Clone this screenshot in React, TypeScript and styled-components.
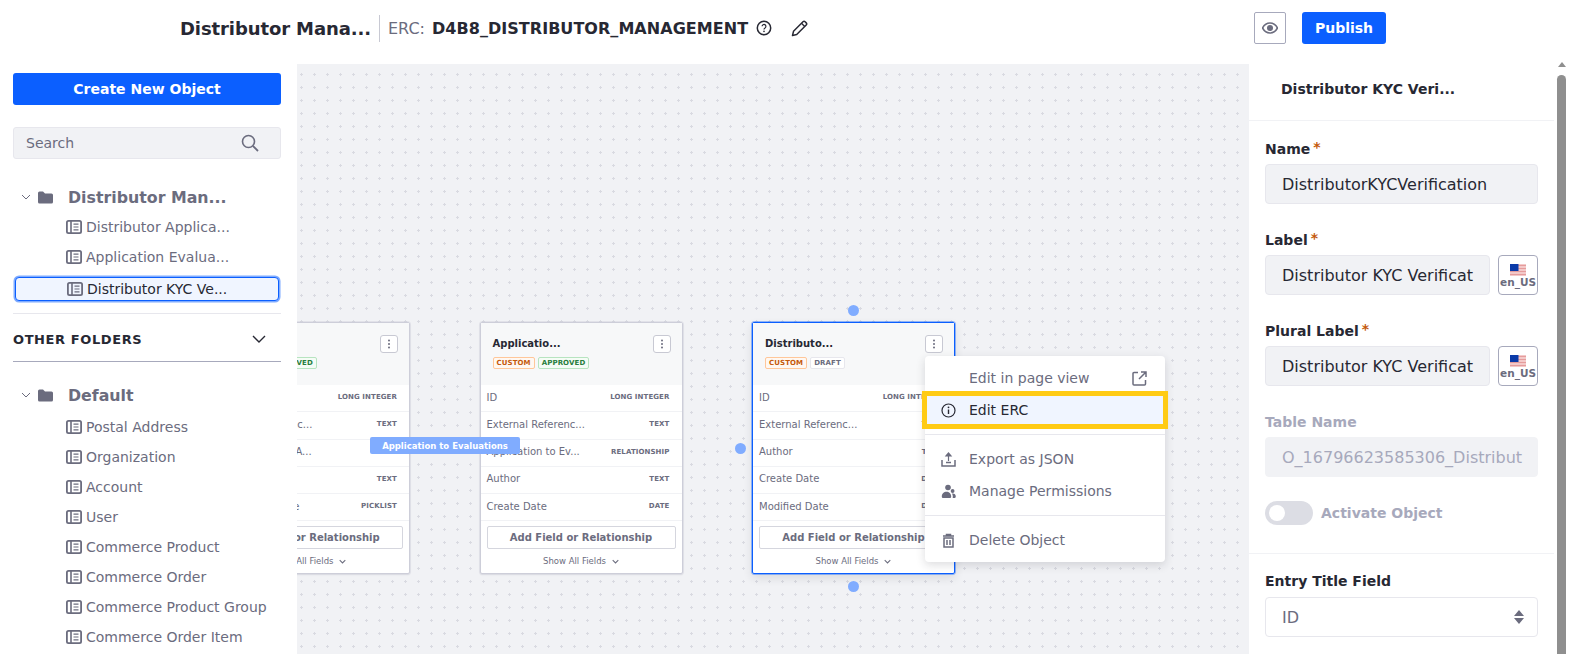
import React from "react"
import styled, { createGlobalStyle } from "styled-components"

const GlobalStyle = createGlobalStyle`
  html, body {
    margin: 0;
    padding: 0;
    background: #fff;
    font-family: "DejaVu Sans", sans-serif;
    color: #272833;
  }
  * {
    box-sizing: border-box;
  }
`

const Page = styled.div`
  width: 1570px;
  height: 654px;
  overflow: hidden;
  display: flex;
  flex-direction: column;
  background: #fff;
`

const Header = styled.header`
  height: 57px;
  flex: none;
  display: flex;
  align-items: center;
  padding: 0 184px 1px 180px;
`
const ModelTitle = styled.h1`
  margin: 0;
  width: 190px;
  font-size: 18px;
  font-weight: 700;
  letter-spacing: -0.1px;
  color: #272833;
  white-space: nowrap;
`
const HeaderDivider = styled.span`
  width: 1px;
  height: 27px;
  margin: 0 8px 0 9px;
  background: #c8c9d3;
`
const ErcLabel = styled.span`
  font-size: 16px;
  color: #6b6c7e;
  margin-right: 7px;
`
const ErcValue = styled.span`
  font-size: 16px;
  font-weight: 700;
  letter-spacing: 0.04px;
  color: #272833;
`
const HelpIcon = styled.svg`
  margin-left: 8px;
  width: 16px;
  height: 16px;
`
const PencilIcon = styled.svg`
  margin-left: 19px;
  width: 17px;
  height: 17px;
`
const HeaderActions = styled.div`
  margin-left: auto;
  display: flex;
  gap: 16px;
  align-items: center;
`
const EyeButton = styled.button`
  width: 32px;
  height: 32px;
  padding: 0;
  display: flex;
  align-items: center;
  justify-content: center;
  background: #fff;
  border: 1px solid #a7a9bc;
  border-radius: 2px;
`
const PublishButton = styled.button`
  width: 84px;
  height: 32px;
  border: none;
  border-radius: 3px;
  background: #0b5fff;
  color: #fff;
  font-family: inherit;
  font-size: 14px;
  font-weight: 700;
`

const Body = styled.div`
  flex: 1;
  min-height: 0;
  display: flex;
`

const Sidebar = styled.aside`
  position: relative;
  z-index: 2;
  width: 297px;
  flex: none;
  padding: 16px 16px 0 13px;
  background: #fff;
  overflow: hidden;
`
const CreateButton = styled.button`
  display: block;
  width: 268px;
  height: 32px;
  border: none;
  border-radius: 3px;
  background: #0b5fff;
  color: #fff;
  font-family: inherit;
  font-size: 14px;
  font-weight: 700;
`
const SearchBox = styled.div`
  margin-top: 22px;
  width: 268px;
  height: 32px;
  display: flex;
  align-items: center;
  justify-content: space-between;
  padding: 0 21px 0 12px;
  background: #f1f2f5;
  border: 1px solid #e7e7ed;
  border-radius: 3px;
  font-size: 14px;
  color: #6b6c7e;
`
const FolderRow = styled.div<{ $top: number }>`
  margin-top: ${(p) => p.$top}px;
  height: 24px;
  display: flex;
  align-items: center;
  padding-left: 8px;
`
const Caret = styled.svg`
  width: 10px;
  height: 10px;
`
const FolderIcon = styled.svg`
  margin-left: 7px;
  width: 15px;
  height: 13px;
`
const FolderName = styled.span`
  margin-left: 15px;
  font-size: 15.8px;
  font-weight: 700;
  color: #6b6c7e;
`
const ObjectList = styled.ul<{ $top: number }>`
  margin: ${(p) => p.$top}px 0 0;
  padding: 0;
  list-style: none;
`
const ObjectItem = styled.li<{ $active?: boolean }>`
  height: ${(p) => (p.$active ? "24px" : "30px")};
  margin: ${(p) => (p.$active ? "5px 2px 0" : "0")};
  display: flex;
  align-items: center;
  gap: 4px;
  padding-left: ${(p) => (p.$active ? "51px" : "53px")};
  font-size: 14px;
  white-space: nowrap;
  color: ${(p) => (p.$active ? "#272833" : "#6b6c7e")};
  ${(p) =>
    p.$active &&
    `
    background: #f0f5ff;
    border: 1px solid #0b5fff;
    border-radius: 4px;
    box-shadow: 0 0 0 1.5px #80acff;
  `}
`
const ObjectGlyph = styled.svg`
  flex: none;
  width: 16px;
  height: 14px;
`
const SideDivider = styled.div<{ $strong?: boolean; $top?: number }>`
  width: 268px;
  height: 1px;
  margin-top: ${(p) => p.$top ?? 0}px;
  background: ${(p) => (p.$strong ? "#a7a9bc" : "#e7e7ed")};
`
const OtherFolders = styled.div`
  width: 268px;
  height: 44px;
  margin-top: 3px;
  display: flex;
  align-items: center;
  justify-content: space-between;
  padding-right: 15px;
  font-size: 13px;
  font-weight: 700;
  letter-spacing: 0.6px;
  color: #272833;
`
const ChevronBig = styled.svg`
  width: 14px;
  height: 14px;
`

const Canvas = styled.main`
  position: relative;
  flex: 1;
  min-width: 0;
  margin-top: 7px;
  background-color: #f1f2f5;
  background-image: radial-gradient(circle, #d9dae1 1px, transparent 1.2px);
  background-size: 13px 13px;
  background-position: -2px 4px;
`
const Card = styled.article<{ $left: number; $selected?: boolean }>`
  position: absolute;
  left: ${(p) => p.$left}px;
  top: 258px;
  width: 203px;
  height: 252px;
  background: #fff;
  border: 1px solid ${(p) => (p.$selected ? "#0b5fff" : "#cdced9")};
  outline: 1px solid ${(p) => (p.$selected ? "rgba(11, 95, 255, 0.4)" : "rgba(205, 206, 217, 0.4)")};
  border-radius: 2px;
  box-shadow: ${(p) => (p.$selected ? "0 4px 10px rgba(39, 40, 51, 0.12)" : "0 1px 2px rgba(39, 40, 51, 0.08)")};
`
const CardHead = styled.div`
  position: relative;
  height: 62px;
  padding: 15px 12px 0 12px;
  background: #f7f8f9;
`
const CardTitle = styled.div`
  font-size: 10px;
  font-weight: 700;
  color: #272833;
  line-height: 12px;
`
const Tags = styled.div`
  margin-top: 7px;
  display: flex;
  gap: 3px;
`
const Tag = styled.span<{ $kind: "custom" | "approved" | "draft" }>`
  height: 12px;
  padding: 0 3px;
  display: flex;
  align-items: center;
  font-size: 7px;
  font-weight: 700;
  letter-spacing: 0.1px;
  border-radius: 2px;
  border: 1px solid
    ${(p) => (p.$kind === "custom" ? "#ffc79a" : p.$kind === "approved" ? "#b7e4c0" : "#e7e7ed")};
  color: ${(p) => (p.$kind === "custom" ? "#c4590a" : p.$kind === "approved" ? "#287d3c" : "#6b6c7e")};
  background: ${(p) => (p.$kind === "custom" ? "#fff8f2" : p.$kind === "approved" ? "#f5fcf6" : "#fff")};
`
const KebabButton = styled.span`
  position: absolute;
  top: 12px;
  right: 11px;
  width: 18px;
  height: 18px;
  display: flex;
  align-items: center;
  justify-content: center;
  background: #fff;
  border: 1px solid #c8c9d3;
  border-radius: 3px;
`
const FieldRow = styled.div`
  height: 27.25px;
  display: flex;
  align-items: center;
  justify-content: space-between;
  padding: 0 12px 2px 6px;
  border-bottom: 1px solid #f1f2f5;
  &:last-of-type {
    border-bottom: none;
  }
`
const FieldName = styled.span`
  font-size: 10px;
  color: #6b6c7e;
  white-space: nowrap;
`
const FieldType = styled.span`
  font-size: 7px;
  font-weight: 700;
  letter-spacing: 0.1px;
  color: #6b6c7e;
`
const AddField = styled.div`
  margin: 5px 6px 0;
  height: 23px;
  display: flex;
  align-items: center;
  justify-content: center;
  border: 1px solid #d5d6de;
  border-radius: 2px;
  font-size: 10px;
  font-weight: 700;
  color: #6b6c7e;
`
const ShowAll = styled.div`
  margin-top: 7px;
  display: flex;
  justify-content: center;
  align-items: center;
  gap: 6px;
  font-size: 8.5px;
  color: #6b6c7e;
`
const EdgeLabel = styled.div`
  position: absolute;
  left: 73px;
  top: 373px;
  width: 150px;
  height: 17px;
  display: flex;
  align-items: center;
  justify-content: center;
  border-radius: 2px;
  background: #80acff;
  color: #fff;
  font-size: 8.5px;
  font-weight: 700;
`
const Handle = styled.span<{ $x: number; $y: number }>`
  position: absolute;
  left: ${(p) => p.$x - 5.5}px;
  top: ${(p) => p.$y - 5.5}px;
  width: 11px;
  height: 11px;
  border-radius: 50%;
  background: #80acff;
`
const Menu = styled.div`
  position: absolute;
  left: 628px;
  top: 292px;
  width: 240px;
  padding: 6px 0;
  background: #fff;
  border-radius: 4px;
  box-shadow: 0 3px 10px rgba(39, 40, 51, 0.16);
`
const MenuRow = styled.div<{ $active?: boolean }>`
  position: relative;
  height: 32px;
  display: flex;
  align-items: center;
  gap: 13px;
  padding: 0 18px 0 16px;
  font-size: 14px;
  color: ${(p) => (p.$active ? "#272833" : "#6b6c7e")};
  ${(p) =>
    p.$active &&
    `
    background: #f0f5ff;
    outline: 5px solid #ffcb14;
    outline-offset: -2px;
  `}
`
const MenuIcon = styled.svg`
  width: 15px;
  height: 15px;
  flex: none;
`
const MenuSpacer = styled.span`
  width: 15px;
  flex: none;
`
const OpenIcon = styled.svg`
  margin-left: auto;
  width: 15px;
  height: 15px;
`
const MenuDivider = styled.div`
  height: 1px;
  margin: 8px 0;
  background: #e7e7ed;
`

const Panel = styled.aside`
  position: relative;
  z-index: 2;
  width: 305px;
  flex: none;
  background: #fff;
  overflow: hidden;
`
const PanelTitle = styled.div`
  height: 64px;
  padding: 0 0 0 32px;
  display: flex;
  align-items: center;
  font-size: 14px;
  font-weight: 700;
  color: #272833;
  border-bottom: 1px solid #f1f2f5;
`
const PanelBody = styled.div`
  padding: 19px 16px 0;
`
const FieldLabel = styled.label<{ $disabled?: boolean }>`
  display: block;
  height: 18px;
  margin-top: 27px;
  font-size: 14px;
  line-height: 18px;
  font-weight: 700;
  color: ${(p) => (p.$disabled ? "#a7a9bc" : "#272833")};
  &:first-child {
    margin-top: 0;
  }
`
const Star = styled.sup`
  margin-left: 3px;
  color: #c4590a;
  font-size: 14px;
  line-height: 0;
  vertical-align: 2px;
`
const InputLine = styled.div`
  display: flex;
  gap: 8px;
  margin-top: 6px;
`
const TextInput = styled.div<{ $disabled?: boolean }>`
  flex: 1;
  min-width: 0;
  height: 40px;
  padding: 0 16px;
  display: flex;
  align-items: center;
  white-space: nowrap;
  background: #f1f2f5;
  border: 1px solid ${(p) => (p.$disabled ? "#f1f2f5" : "#e7e7ed")};
  border-radius: 4px;
  font-size: 16px;
  color: ${(p) => (p.$disabled ? "#a7a9bc" : "#272833")};
`
const LocaleButton = styled.div`
  width: 40px;
  height: 40px;
  flex: none;
  padding-top: 2px;
  display: flex;
  flex-direction: column;
  align-items: center;
  justify-content: center;
  background: #fff;
  border: 1px solid #a7a9bc;
  border-radius: 4px;
  font-size: 10.5px;
  line-height: 13px;
  font-weight: 700;
  color: #6b6c7e;
`
const ToggleRow = styled.div`
  margin-top: 24px;
  display: flex;
  align-items: center;
  gap: 8px;
  font-size: 14px;
  font-weight: 700;
  color: #a7a9bc;
`
const Toggle = styled.span`
  position: relative;
  width: 48px;
  height: 24px;
  border-radius: 12px;
  background: #dcdde4;
  &::after {
    content: "";
    position: absolute;
    left: 4px;
    top: 4px;
    width: 16px;
    height: 16px;
    border-radius: 50%;
    background: #fff;
  }
`
const SectionDivider = styled.div`
  margin: 28px -16px 18px;
  height: 1px;
  background: #f1f2f5;
`
const EntrySection = styled.section``
const SelectBox = styled(TextInput)`
  flex: none;
  justify-content: space-between;
  background: #fff;
  color: #6b6c7e;
  margin-top: 7px;
  padding-right: 13px;
`
const Scrollbar = styled.div`
  flex: none;
  width: 16px;
  padding: 5px 4px 0 3px;
  display: flex;
  flex-direction: column;
  gap: 8px;
  background: #fff;
`
const ScrollArrow = styled.span`
  width: 0;
  height: 0;
  align-self: center;
  border-left: 4.5px solid transparent;
  border-right: 4.5px solid transparent;
  border-bottom: 5px solid #8f8f8f;
`
const ScrollThumb = styled.span`
  flex: 1;
  border-radius: 5px 5px 0 0;
  background: #8f8f8f;
`

const ObjectSvg = () => (
  <ObjectGlyph viewBox="0 0 16 14">
    <rect x="0.9" y="0.9" width="14.2" height="12.2" rx="1.6" fill="none" stroke="#6b6c7e" strokeWidth="1.8" />
    <path d="M5 1v12" stroke="#6b6c7e" strokeWidth="1.6" />
    <path d="M7.500 4.200h5M7.500 7h5M7.500 9.800h5" stroke="#6b6c7e" strokeWidth="1.200" />
  </ObjectGlyph>
)

const Folder = ({ top, name }: { top: number; name: string }) => (
  <FolderRow $top={top}>
    <Caret viewBox="0 0 10 10">
      <path d="M1 3l4 4 4-4" fill="none" stroke="#6b6c7e" strokeWidth="1" />
    </Caret>
    <FolderIcon viewBox="0 0 15 13">
      <path d="M0 2a1.500 1.500 0 0 1 1.500-1.500h3.500l2 2h6.500a1.500 1.500 0 0 1 1.500 1.500v7a1.500 1.500 0 0 1-1.500 1.500h-12a1.500 1.500 0 0 1-1.500-1.500z" fill="#6b6c7e" />
    </FolderIcon>
    <FolderName>{name}</FolderName>
  </FolderRow>
)

const Flag = () => (
  <svg width="16" height="12" viewBox="0 0 16 12">
    <rect width="16" height="12" fill="#f3c9c9" />
    <path d="M0 1.500h16M0 4.500h16M0 7.500h16M0 10.500h16" stroke="#e59c9c" strokeWidth="1" />
    <rect width="8.500" height="7" fill="#0b3aa8" />
  </svg>
)

const Kebab = () => (
  <svg width="4" height="10" viewBox="0 0 4 10">
    <circle cx="2" cy="1.500" r="1" fill="#6b6c7e" />
    <circle cx="2" cy="5" r="1" fill="#6b6c7e" />
    <circle cx="2" cy="8.500" r="1" fill="#6b6c7e" />
  </svg>
)

type NodeField = { name: string; type: string }
type NodeData = {
  left: number
  title: string
  status: "approved" | "draft"
  selected?: boolean
  fields: NodeField[]
}

const nodes: NodeData[] = [
  {
    left: -90,
    title: "Distributo...",
    status: "approved",
    fields: [
      { name: "ID", type: "LONG INTEGER" },
      { name: "External Referenc...", type: "TEXT" },
      { name: "Application into A...", type: "TEXT" },
      { name: "Author", type: "TEXT" },
      { name: "Application State", type: "PICKLIST" },
    ],
  },
  {
    left: 182.5,
    title: "Applicatio...",
    status: "approved",
    fields: [
      { name: "ID", type: "LONG INTEGER" },
      { name: "External Referenc...", type: "TEXT" },
      { name: "Application to Ev...", type: "RELATIONSHIP" },
      { name: "Author", type: "TEXT" },
      { name: "Create Date", type: "DATE" },
    ],
  },
  {
    left: 455,
    title: "Distributo...",
    status: "draft",
    selected: true,
    fields: [
      { name: "ID", type: "LONG INTEGER" },
      { name: "External Referenc...", type: "TEXT" },
      { name: "Author", type: "TEXT" },
      { name: "Create Date", type: "DATE" },
      { name: "Modified Date", type: "DATE" },
    ],
  },
]

const NodeCard = ({ node }: { node: NodeData }) => (
  <Card $left={node.left} $selected={node.selected}>
    <CardHead>
      <CardTitle>{node.title}</CardTitle>
      <Tags>
        <Tag $kind="custom">CUSTOM</Tag>
        <Tag $kind={node.status}>{node.status.toUpperCase()}</Tag>
      </Tags>
      <KebabButton>
        <Kebab />
      </KebabButton>
    </CardHead>
    {node.fields.map((f) => (
      <FieldRow key={f.name}>
        <FieldName>{f.name}</FieldName>
        <FieldType>{f.type}</FieldType>
      </FieldRow>
    ))}
    <AddField>Add Field or Relationship</AddField>
    <ShowAll>
      Show All Fields
      <svg width="7" height="7" viewBox="0 0 10 10">
        <path d="M1 3l4 4 4-4" fill="none" stroke="#6b6c7e" strokeWidth="1.500" />
      </svg>
    </ShowAll>
  </Card>
)

const firstObjects = ["Distributor Applica...", "Application Evalua..."]
const defaultObjects = [
  "Postal Address",
  "Organization",
  "Account",
  "User",
  "Commerce Product",
  "Commerce Order",
  "Commerce Product Group",
  "Commerce Order Item",
]

export default function App() {
  return (
    <Page>
      <GlobalStyle />
      <Header>
        <ModelTitle>Distributor Mana...</ModelTitle>
        <HeaderDivider />
        <ErcLabel>ERC:</ErcLabel>
        <ErcValue>D4B8_DISTRIBUTOR_MANAGEMENT</ErcValue>
        <HelpIcon viewBox="0 0 16 16">
          <circle cx="8" cy="8" r="6.700" fill="none" stroke="#272833" strokeWidth="1.500" />
          <path d="M6.100 6.300a1.900 1.900 0 1 1 2.900 1.600c-.7.400-1 .8-1 1.500" fill="none" stroke="#272833" strokeWidth="1.200" />
          <circle cx="8" cy="11.400" r=".8" fill="#272833" />
        </HelpIcon>
        <PencilIcon viewBox="0 0 17 17">
          <path d="M1.500 15.500l1-4.200L12 1.800a1.500 1.500 0 0 1 2.100 0l1.100 1.100a1.500 1.500 0 0 1 0 2.100L5.700 14.500z" fill="none" stroke="#272833" strokeWidth="1.500" strokeLinejoin="round" />
          <path d="M10.500 3.300l3.200 3.200" stroke="#272833" strokeWidth="1.300" />
        </PencilIcon>
        <HeaderActions>
          <EyeButton aria-label="Preview">
            <svg width="16" height="12" viewBox="0 0 16 12">
              <path d="M.5 6C2.200 2.800 4.900 1 8 1s5.800 1.800 7.500 5C13.800 9.200 11.100 11 8 11S2.200 9.200.5 6z" fill="none" stroke="#6b6c7e" strokeWidth="1.600" />
              <circle cx="8" cy="6" r="3" fill="#6b6c7e" />
            </svg>
          </EyeButton>
          <PublishButton>Publish</PublishButton>
        </HeaderActions>
      </Header>
      <Body>
        <Sidebar>
          <CreateButton>Create New Object</CreateButton>
          <SearchBox>
            Search
            <svg width="18" height="18" viewBox="0 0 18 18">
              <circle cx="7.500" cy="7.500" r="6" fill="none" stroke="#6b6c7e" strokeWidth="1.600" />
              <path d="M12 12l5 5" stroke="#6b6c7e" strokeWidth="1.800" />
            </svg>
          </SearchBox>
          <Folder top={26} name="Distributor Man..." />
          <ObjectList $top={3}>
            {firstObjects.map((o) => (
              <ObjectItem key={o}>
                <ObjectSvg />
                {o}
              </ObjectItem>
            ))}
            <ObjectItem $active>
              <ObjectSvg />
              Distributor KYC Ve...
            </ObjectItem>
          </ObjectList>
          <SideDivider $top={12} />
          <OtherFolders>
            OTHER FOLDERS
            <ChevronBig viewBox="0 0 14 14">
              <path d="M1 4l6 6 6-6" fill="none" stroke="#272833" strokeWidth="1.400" />
            </ChevronBig>
          </OtherFolders>
          <SideDivider $strong />
          <Folder top={21} name="Default" />
          <ObjectList $top={5}>
            {defaultObjects.map((o) => (
              <ObjectItem key={o}>
                <ObjectSvg />
                {o}
              </ObjectItem>
            ))}
          </ObjectList>
        </Sidebar>
        <Canvas>
          {nodes.map((n) => (
            <NodeCard key={n.left} node={n} />
          ))}
          <EdgeLabel>Application to Evaluations</EdgeLabel>
          <Handle $x={556} $y={246} />
          <Handle $x={443} $y={384} />
          <Handle $x={556} $y={522} />
          <Menu>
            <MenuRow>
              <MenuSpacer />
              Edit in page view
              <OpenIcon viewBox="0 0 15 15">
                <path d="M6 1.500H2a1 1 0 0 0-1 1v10.500a1 1 0 0 0 1 1h10.500a1 1 0 0 0 1-1V9" fill="none" stroke="#6b6c7e" strokeWidth="1.500" />
                <path d="M9 1h5v5M14 1L7 8" fill="none" stroke="#6b6c7e" strokeWidth="1.500" />
              </OpenIcon>
            </MenuRow>
            <MenuRow $active>
              <MenuIcon viewBox="0 0 15 15">
                <circle cx="7.500" cy="7.500" r="6.500" fill="none" stroke="#272833" strokeWidth="1.200" />
                <path d="M7.500 6.500v4.500" stroke="#272833" strokeWidth="1.400" />
                <circle cx="7.500" cy="4.300" r=".9" fill="#272833" />
              </MenuIcon>
              Edit ERC
            </MenuRow>
            <MenuDivider />
            <MenuRow>
              <MenuIcon viewBox="0 0 15 15">
                <path d="M1 8v6h13V8M5 10.500h5" fill="none" stroke="#6b6c7e" strokeWidth="1.500" />
                <path d="M7.500 9V2M5 4l2.500-3L10 4z" fill="#6b6c7e" stroke="#6b6c7e" strokeWidth="1.200" />
              </MenuIcon>
              Export as JSON
            </MenuRow>
            <MenuRow>
              <MenuIcon viewBox="0 0 15 15">
                <circle cx="7" cy="3.500" r="2.800" fill="#6b6c7e" />
                <path d="M.8 12.500c0-3 2.200-4.800 4.700-4.800s4.700 1.800 4.700 4.800c0 1-.8 1.500-1.500 1.500H2.300c-.8 0-1.500-.5-1.500-1.500z" fill="#6b6c7e" />
                <circle cx="11.600" cy="7" r="1.900" fill="#6b6c7e" />
                <path d="M11 9.500c2-.5 3.800.8 3.800 3 0 .8-.5 1.500-1.300 1.500h-1.800c.4-1.800-.1-3.300-.7-4.500z" fill="#6b6c7e" />
              </MenuIcon>
              Manage Permissions
            </MenuRow>
            <MenuDivider />
            <MenuRow>
              <MenuIcon viewBox="0 0 15 15">
                <path d="M2 3h11M5.500 3V1.500h4V3" fill="none" stroke="#6b6c7e" strokeWidth="1.500" />
                <path d="M3 5h9v9H3z" fill="none" stroke="#6b6c7e" strokeWidth="1.500" />
                <path d="M6 7v5M9 7v5" stroke="#6b6c7e" strokeWidth="1.500" />
              </MenuIcon>
              Delete Object
            </MenuRow>
          </Menu>
        </Canvas>
        <Panel>
          <PanelTitle>Distributor KYC Veri...</PanelTitle>
          <PanelBody>
            <FieldLabel>
              Name<Star>*</Star>
            </FieldLabel>
            <InputLine>
              <TextInput>DistributorKYCVerification</TextInput>
            </InputLine>
            <FieldLabel>
              Label<Star>*</Star>
            </FieldLabel>
            <InputLine>
              <TextInput>Distributor KYC Verificat</TextInput>
              <LocaleButton>
                <Flag />
                en_US
              </LocaleButton>
            </InputLine>
            <FieldLabel>
              Plural Label<Star>*</Star>
            </FieldLabel>
            <InputLine>
              <TextInput>Distributor KYC Verificat</TextInput>
              <LocaleButton>
                <Flag />
                en_US
              </LocaleButton>
            </InputLine>
            <FieldLabel $disabled>Table Name</FieldLabel>
            <InputLine>
              <TextInput $disabled>O_16796623585306_Distribut</TextInput>
            </InputLine>
            <ToggleRow>
              <Toggle />
              Activate Object
            </ToggleRow>
            <SectionDivider />
            <EntrySection>
              <FieldLabel>Entry Title Field</FieldLabel>
              <SelectBox>
                ID
                <svg width="10" height="14" viewBox="0 0 10 14">
                  <path d="M5 0l5 6H0zM5 14l5-6H0z" fill="#6b6c7e" />
                </svg>
              </SelectBox>
            </EntrySection>
          </PanelBody>
        </Panel>
        <Scrollbar>
          <ScrollArrow />
          <ScrollThumb />
        </Scrollbar>
      </Body>
    </Page>
  )
}
